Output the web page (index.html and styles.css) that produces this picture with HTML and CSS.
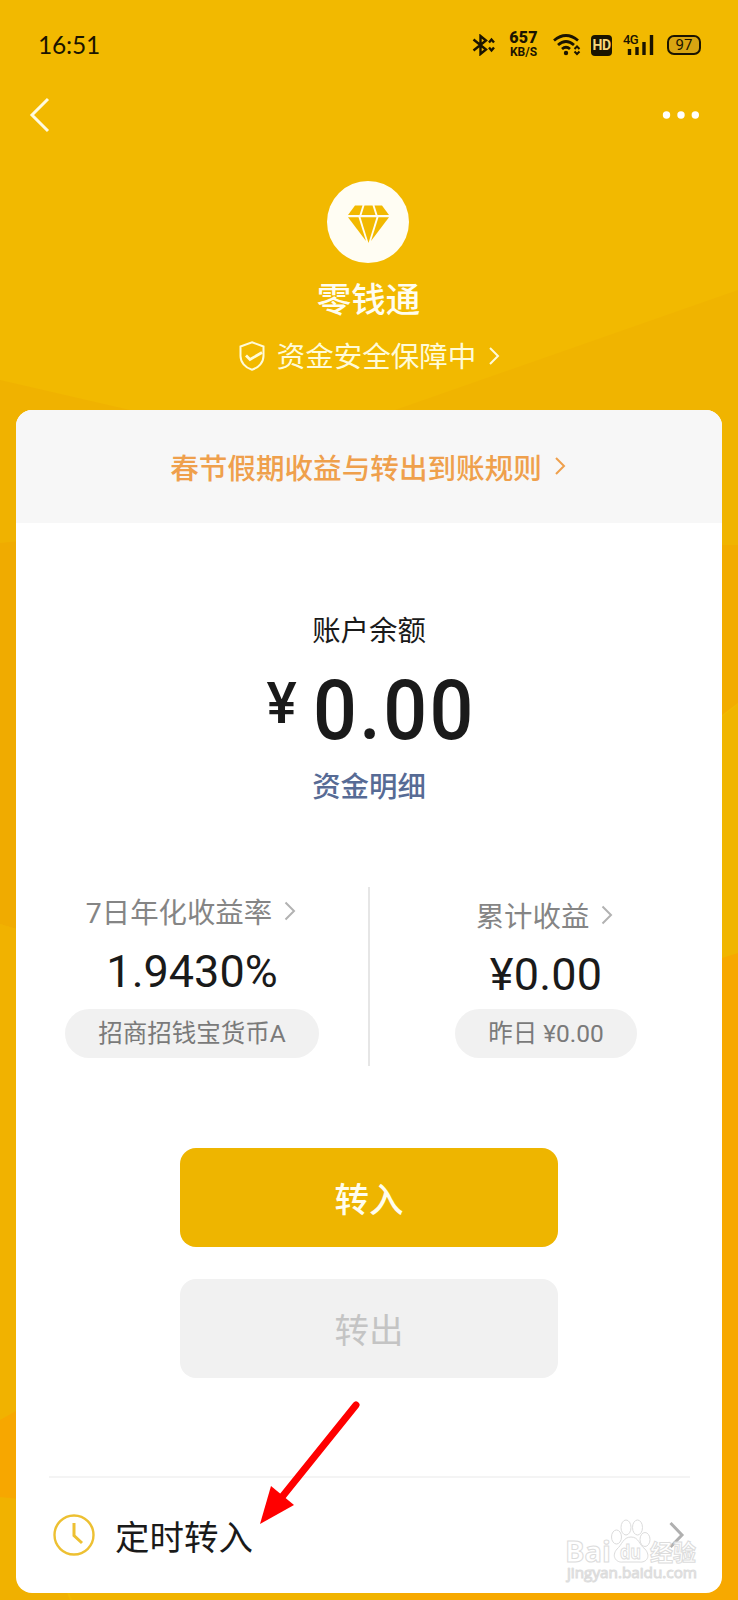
FILE: index.html
```html
<!DOCTYPE html>
<html lang="zh-CN">
<head>
<meta charset="utf-8">
<title>零钱通</title>
<link rel="stylesheet" href="styles.css">
</head>
<body>
<div class="screen">
  <svg class="backdrop" viewBox="0 0 738 1600" preserveAspectRatio="none" aria-hidden="true">
    <rect width="738" height="1600" fill="#f2b900"/>
    <path d="M738 290L395 410L300 700H738Z" fill="#f0b400"/>
    <path d="M0 380L130 410L200 600L0 950Z" fill="#f0b200"/>
    <path d="M0 543L30 540V933L0 924Z" fill="#f0ab00"/>
    <path d="M0 924L30 933V1600H0Z" fill="#f1b200"/>
    <path d="M0 1420L16 1411H30V1500L0 1497Z" fill="#f7a700"/>
    <path d="M700 545H738V703L722 715L700 720Z" fill="#f2ac00"/>
    <path d="M700 722L722 717L738 704V958H700Z" fill="#f0b500"/>
    <path d="M700 965L738 953V1600H560Z" fill="#f7a800"/>
    <path d="M0 1590H66L70 1600H0Z" fill="#f0b000"/>
    <path d="M68 1590H400V1600H72Z" fill="#f1b400"/>
    <path d="M400 1590H738V1600H400Z" fill="#f7a900"/>
  </svg>

  <header class="status">
    <span class="clock">16:51</span>
    <div class="indicators">
      <svg class="i-bt" width="24" height="22" viewBox="0 0 24 22" fill="none" stroke="#1b1400" stroke-width="2.400">
        <path d="M1.500 5.500L14 15.500L8.500 20V2L14 6.500L1.500 16.500"/><path d="M17 8.500L19.500 5.500L22 8.500M17 13.500L19.500 16.500L22 13.500"/>
      </svg>
      <div class="speed"><b>657</b><span>KB/S</span></div>
      <svg class="i-wifi" width="28" height="22" viewBox="0 0 28 22" fill="none" stroke="#1b1400" stroke-width="2.800">
        <path d="M1 6.500Q13 -3.500 25 6.500M5 11Q13 4 21 11M9 15Q13 11.500 17 15"/><circle cx="13" cy="19" r="2.200" fill="#1b1400" stroke="none"/><path stroke-width="2" d="M21.500 15L24 12.500L26.500 15M21.500 17.500L24 20L26.500 17.500"/>
      </svg>
      <span class="hd">HD</span>
      <div class="signal">
        <span>4G</span>
        <svg width="31" height="22" viewBox="0 0 31 22" fill="none" stroke="#1b1400" stroke-width="3.400"><path d="M6.500 15V21M14 13V21M21 8V21M28.500 1V21"/></svg>
      </div>
      <div class="battery"><span>97</span></div>
    </div>
  </header>

  <nav class="nav">
    <svg width="22" height="36" viewBox="0 0 22 36" fill="none" stroke="#fffbe0" stroke-width="3"><path d="M19 2L3 18L19 34"/></svg>
    <svg width="38" height="8" viewBox="0 0 38 8" fill="#fff"><circle cx="4.500" cy="4" r="3.700"/><circle cx="19" cy="4" r="3.700"/><circle cx="33.300" cy="4" r="3.700"/></svg>
  </nav>

  <section class="brand">
    <svg class="logo" width="82" height="82" viewBox="0 0 82 82">
      <circle cx="41" cy="41" r="41" fill="#fffdf3"/>
      <g fill="#f2b900"><path d="M28 24.500H35.500L32.500 34H21Z"/><path d="M37.500 24.500H45.500L48.500 34H34.500Z"/><path d="M47.500 24.500H55L62 34H50.500Z"/><path d="M21 36.200H31.500L39 60Z"/><path d="M33.500 36.200H49.500L41.500 62Z"/><path d="M51.500 36.200H62L44 60Z"/></g>
    </svg>
    <h1 class="title">零钱通</h1>
    <div class="safe">
      <svg width="26" height="30" viewBox="0 0 26 30" fill="none" stroke="#fffbd8" stroke-width="2"><path d="M13 1.200L24.500 5.500V15C24.500 21 20 26.500 13 28.800C6 26.500 1.500 21 1.500 15V5.500Z"/><path stroke-width="2.800" d="M7 14.500L11 18.500L23 11.500"/></svg>
      <span>资金安全保障中</span>
      <svg width="12" height="20" viewBox="0 0 12 20" fill="none" stroke="#fffbd8" stroke-width="2"><path d="M2 2L10 10L2 18"/></svg>
    </div>
  </section>

  <main class="card">
    <div class="notice">
      <span>春节假期收益与转出到账规则</span>
      <svg width="12" height="20" viewBox="0 0 12 20" fill="none" stroke="#efa04c" stroke-width="2"><path d="M2 2L10 10L2 18"/></svg>
    </div>
    <div class="balance">
      <div class="label">账户余额</div>
      <div class="amount"><span class="yen">¥</span><span class="num">0.00</span></div>
      <div class="detail">资金明细</div>
    </div>
    <div class="stats">
      <div class="stat stat-left">
        <div class="name"><span>7日年化收益率</span><svg width="12" height="20" viewBox="0 0 12 20" fill="none" stroke="#b2b2b2" stroke-width="2"><path d="M1.500 1.500L10 10L1.500 18.500"/></svg></div>
        <div class="value">1.9430%</div>
        <div class="pill">招商招钱宝货币A</div>
      </div>
      <div class="stat stat-right">
        <div class="name"><span>累计收益</span><svg width="12" height="20" viewBox="0 0 12 20" fill="none" stroke="#b2b2b2" stroke-width="2"><path d="M1.500 1.500L10 10L1.500 18.500"/></svg></div>
        <div class="value">¥0.00</div>
        <div class="pill">昨日 ¥0.00</div>
      </div>
    </div>
    <div class="actions">
      <div class="btn btn-in">转入</div>
      <div class="btn btn-out">转出</div>
    </div>
    <div class="row">
      <svg width="42" height="42" viewBox="0 0 42 42" fill="none" stroke="#edc032" stroke-width="2.400"><circle cx="21" cy="21" r="19.500"/><path stroke-width="3" d="M21 9V21.500L29 29"/></svg>
      <span>定时转入</span>
      <svg class="go" width="16" height="28" viewBox="0 0 16 28" fill="none" stroke="#b0b0b0" stroke-width="3"><path d="M1.500 2L13 14L1.500 26"/></svg>
    </div>
  </main>

  <svg class="arrow" width="104" height="130" viewBox="0 0 104 130" aria-hidden="true">
    <path d="M99 8L25 100" stroke="#f00" stroke-width="7" stroke-linecap="round"/><path d="M3 127L14 89L37 108Z" fill="#f00"/>
  </svg>
  <svg class="watermark" width="150" height="74" viewBox="0 0 150 74" fill="#fff" stroke="#d9d9d9" stroke-width="1">
    <text x="8" y="52" font-size="29" font-weight="700" textLength="46" lengthAdjust="spacingAndGlyphs">Bai</text>
    <g><ellipse cx="59.500" cy="27" rx="5" ry="7"/><ellipse cx="69" cy="17.500" rx="5" ry="7.500"/><ellipse cx="80.500" cy="17.500" rx="5" ry="7.500"/><ellipse cx="88" cy="29.500" rx="5" ry="7"/><path d="M74 27C66 27 65 35 60 39C54 46 59 53 66 52H82C90 53 94 46 88 39C82 35 82 27 74 27Z"/></g>
    <text x="63" y="49" font-size="19" font-weight="700" textLength="21" lengthAdjust="spacingAndGlyphs">du</text>
    <text class="wm-cn" x="93" y="51" font-size="23" font-weight="700" textLength="46">经验</text>
    <text class="wm-url" x="10" y="68" font-size="14.500" textLength="130" lengthAdjust="spacingAndGlyphs">jingyan.baidu.com</text>
  </svg>
</div>
</body>
</html>
```
FILE: styles.css
```css
* { box-sizing: border-box; }
body { margin: 0; font-family: Roboto, "Noto Sans CJK SC", sans-serif; color: #1a1a1a; }
.screen { position: relative; width: 738px; height: 1600px; overflow: hidden; display: flex; flex-direction: column; isolation: isolate; }
.backdrop { position: absolute; inset: 0; width: 738px; height: 1600px; z-index: -1; }
svg { display: block; flex: none; }

.status { height: 90px; padding: 0 37px 0 38px; display: flex; align-items: center; justify-content: space-between; color: #1b1400; }
.clock { font: 24.500px/30px Lato, sans-serif; letter-spacing: -.2px; }
.indicators { display: flex; align-items: center; }
.speed { width: 29px; margin-left: 13px; display: flex; flex-direction: column; align-items: center; font-weight: 700; }
.speed b { font-size: 16px; line-height: 14px; letter-spacing: .3px; }
.speed span { font-size: 12px; line-height: 14px; }
.i-wifi { margin-left: 15px; }
.hd { width: 21px; height: 21px; margin-left: 10px; border-radius: 4px; background: #1b1400; color: #f8d77a; font-weight: 700; font-size: 14px; line-height: 21px; text-align: center; letter-spacing: -.5px; }
.signal { position: relative; width: 31px; margin-left: 11px; }
.signal span { position: absolute; left: 0; top: 0; font-size: 13px; line-height: 12px; font-weight: 500; letter-spacing: -.6px; }
.battery { width: 34px; height: 20px; margin-left: 13px; border: 2px solid #1b1400; border-radius: 7px; background: #d9a511; font-size: 15px; line-height: 16px; text-align: center; }

.nav { height: 50px; padding: 0 38px 0 29px; display: flex; align-items: center; justify-content: space-between; }
.brand { height: 270px; padding: 41px 2px 0 0; display: flex; flex-direction: column; align-items: center; color: #fffdf0; }
.title { margin: 12px 0 0 1px; font-size: 34.500px; line-height: 50px; font-weight: 500; }
.safe { height: 40px; margin: 11px 0 0 3px; display: flex; align-items: center; gap: 12px; font-size: 28.500px; line-height: 40px; color: #fffbd8; }
.safe span { padding-top: 3px; height: 42px; }

.card { width: 706px; height: 1183px; margin-left: 16px; border-radius: 16px; background: #fff; overflow: hidden; display: flex; flex-direction: column; }
.notice { height: 113px; background: #f7f7f7; display: flex; align-items: center; justify-content: center; gap: 12px; padding: 0 2px 1px 0; color: #efa04c; font-size: 28.600px; font-weight: 500; }
.balance { height: 364px; padding-top: 89px; display: flex; flex-direction: column; align-items: center; }
.label { font-size: 28.400px; line-height: 40px; }
.amount { height: 110px; margin-left: 3px; display: flex; align-items: flex-start; font-weight: 500; }
.yen { font-size: 57px; line-height: 60px; margin: 22px 16px 0 0; }
.num { font-size: 84px; line-height: 100px; margin: 9px -15px 0 0; letter-spacing: 2.600px; transform: scaleX(.92); transform-origin: 0 50%; }
.detail { font-size: 28.400px; line-height: 40px; font-weight: 500; color: #576b95; margin-top: 6px; }

.stats { height: 179px; display: grid; grid-template-columns: 354px 352px; color: #7a7a7a; }
.stat { display: flex; flex-direction: column; align-items: center; }
.stat-left { border-right: 2px solid #e6e6e6; }
.name { height: 50px; padding-right: 2px; display: flex; align-items: center; gap: 12px; font-size: 28.400px; color: #858585; }
.name span { padding-bottom: 4px; }
.name svg { margin-bottom: 2px; }
.value { font-size: 45px; line-height: 66px; color: #1a1a1a; margin-top: 2px; }
.stat-right .name { margin-top: 4px; padding-right: 3px; }
.stat-right .value { margin-top: 1px; line-height: 65px; letter-spacing: .2px; }
.pill { height: 49px; margin-top: 4px; border-radius: 25px; padding: 0 33px; background: #f1f1f1; font-size: 24.500px; line-height: 49px; }
.stat-right .pill { margin-top: 2px; }

.actions { height: 411px; padding-top: 82px; display: flex; flex-direction: column; align-items: center; gap: 32px; }
.btn { width: 378px; height: 99px; border-radius: 16px; padding-top: 3px; font-size: 34.500px; line-height: 98px; font-weight: 500; text-align: center; }
.btn-in { background: #eeb500; color: #fffdee; }
.btn-out { background: #f1f1f1; color: #c4c4c4; font-weight: 400; }

.row { height: 115px; margin: -1px 32px 0 33px; padding: 1px 5px 0 4px; border-top: 2px solid #f4f4f4; display: flex; align-items: center; font-size: 34.500px; }
.row span { margin-left: 20px; }
.go { margin-left: auto; }

.arrow { position: absolute; left: 257px; top: 1397px; }
.watermark { position: absolute; left: 557px; top: 1510px; opacity: .9; font-family: "Open Sans", sans-serif; }
.wm-cn { font-family: "Noto Sans CJK SC", sans-serif; }
```
